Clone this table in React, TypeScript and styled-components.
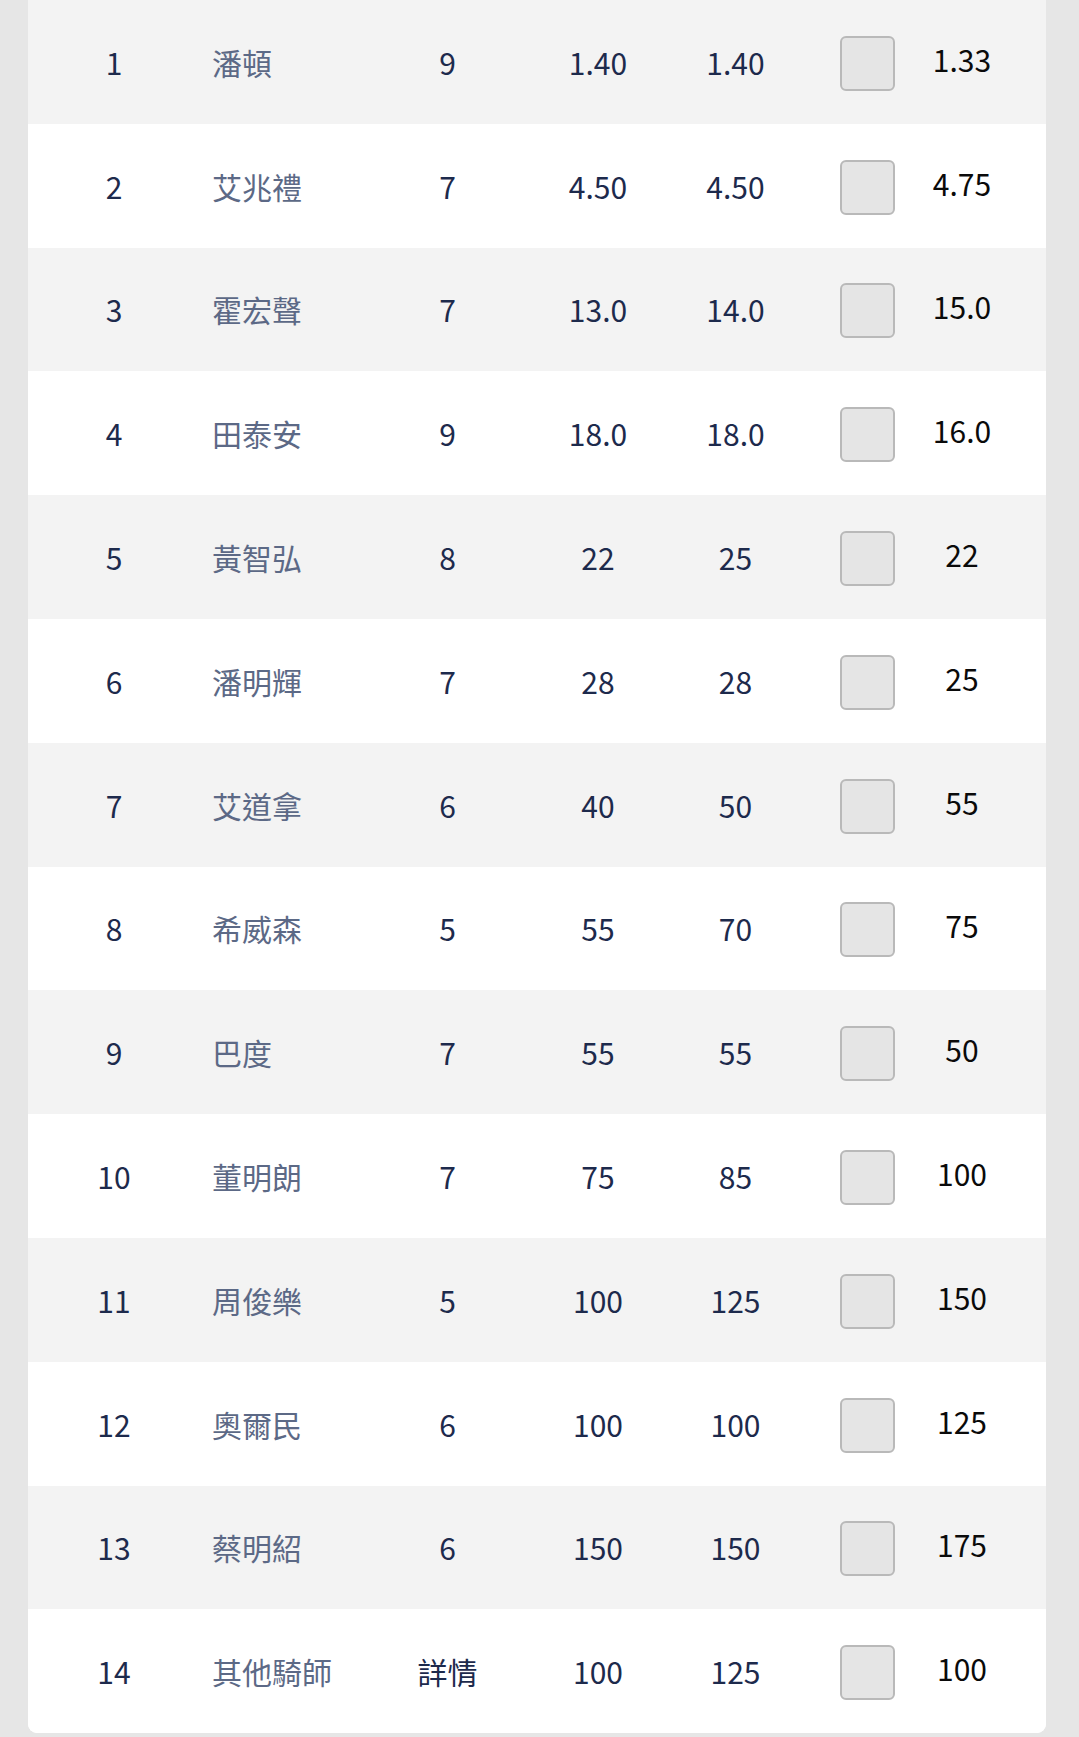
import React from "react";
import styled, { createGlobalStyle } from "styled-components";

const GlobalStyle = createGlobalStyle`
  html, body {
    margin: 0;
    padding: 0;
    background: #e6e6e6;
  }
  body {
    font-family: "Noto Sans CJK TC", "Noto Sans", sans-serif;
  }
`;

const Page = styled.div`
  padding: 0 33px 5px 28px;
`;

const Card = styled.div`
  background: #ffffff;
  border-radius: 0 0 9px 9px;
  overflow: hidden;
`;

const Row = styled.div<{ $shade: boolean }>`
  display: grid;
  grid-template-columns: 172px 172px 151px 150px 125px 139px 50px minmax(0, 1fr);
  align-items: center;
  height: 123.8px;
  background: ${(p) => (p.$shade ? "#f3f3f3" : "#ffffff")};
`;

const Cell = styled.div`
  display: flex;
  justify-content: center;
  font-size: 30px;
  line-height: 1;
  color: #1d2a4c;
  white-space: nowrap;
`;

const NameCell = styled(Cell)`
  justify-content: flex-start;
  padding-left: 12px;
  color: #5c6986;
`;

const WinCell = styled(Cell)`
  padding-bottom: 6px;
  color: #0a0a0a;
`;

const Check = styled.div`
  width: 51px;
  height: 51px;
  box-sizing: content-box;
  border: 2px solid #b9b9b9;
  border-radius: 6px;
  background: #e5e5e5;
  margin-top: 3px;
`;

interface Runner {
  no: number;
  name: string;
  draw: string;
  open: string;
  now: string;
  win: string;
}

const runners: Runner[] = [
  { no: 1, name: "潘頓", draw: "9", open: "1.40", now: "1.40", win: "1.33" },
  { no: 2, name: "艾兆禮", draw: "7", open: "4.50", now: "4.50", win: "4.75" },
  { no: 3, name: "霍宏聲", draw: "7", open: "13.0", now: "14.0", win: "15.0" },
  { no: 4, name: "田泰安", draw: "9", open: "18.0", now: "18.0", win: "16.0" },
  { no: 5, name: "黃智弘", draw: "8", open: "22", now: "25", win: "22" },
  { no: 6, name: "潘明輝", draw: "7", open: "28", now: "28", win: "25" },
  { no: 7, name: "艾道拿", draw: "6", open: "40", now: "50", win: "55" },
  { no: 8, name: "希威森", draw: "5", open: "55", now: "70", win: "75" },
  { no: 9, name: "巴度", draw: "7", open: "55", now: "55", win: "50" },
  { no: 10, name: "董明朗", draw: "7", open: "75", now: "85", win: "100" },
  { no: 11, name: "周俊樂", draw: "5", open: "100", now: "125", win: "150" },
  { no: 12, name: "奧爾民", draw: "6", open: "100", now: "100", win: "125" },
  { no: 13, name: "蔡明紹", draw: "6", open: "150", now: "150", win: "175" },
  { no: 14, name: "其他騎師", draw: "詳情", open: "100", now: "125", win: "100" },
];

const App: React.FC = () => (
  <>
    <GlobalStyle />
    <Page>
      <Card>
        {runners.map((r, i) => (
          <Row key={r.no} $shade={i % 2 === 0}>
            <Cell>{r.no}</Cell>
            <NameCell>{r.name}</NameCell>
            <Cell>{r.draw}</Cell>
            <Cell>{r.open}</Cell>
            <Cell>{r.now}</Cell>
            <Cell>
              <Check />
            </Cell>
            <WinCell>{r.win}</WinCell>
            <div />
          </Row>
        ))}
      </Card>
    </Page>
  </>
);

export default App;
